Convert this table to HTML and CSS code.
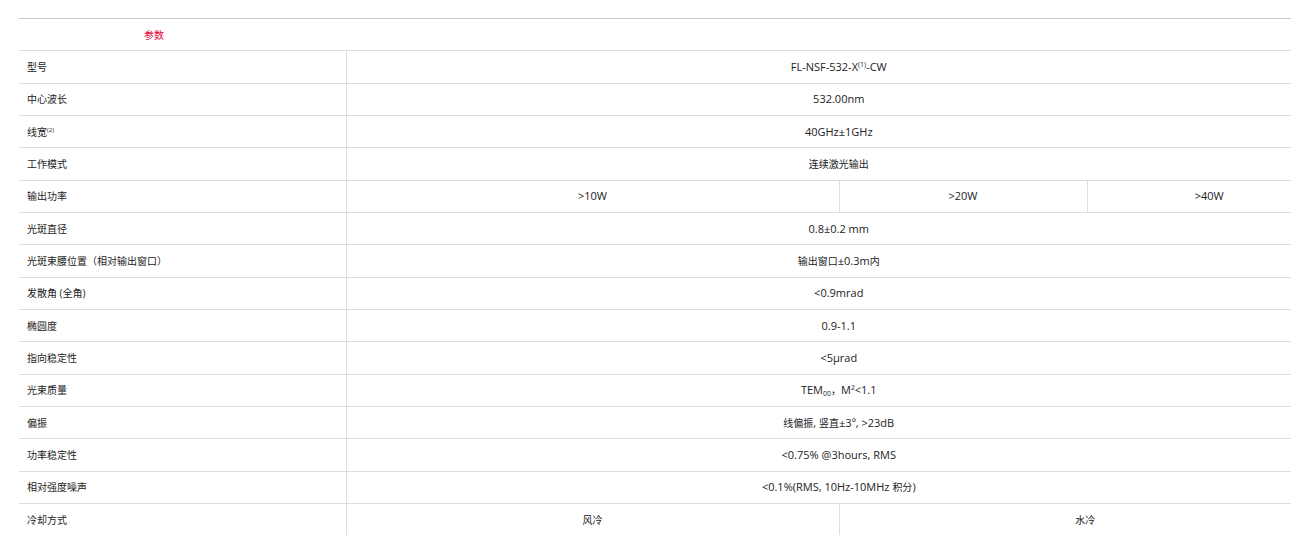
FILE: index.html
```html
<!DOCTYPE html>
<html lang="zh-CN">
<head>
<meta charset="utf-8">
<title>参数</title>
<link rel="stylesheet" href="styles.css">
</head>
<body>
<div class="wrap">
<table class="spec">
  <colgroup>
    <col class="c1"><col class="c2"><col class="c3"><col class="c4">
  </colgroup>
  <thead>
    <tr class="head"><th colspan="4"><span class="title">参数</span></th></tr>
  </thead>
  <tbody>
    <tr><td class="k">型号</td><td colspan="3">FL-NSF-532-X<sup>(1)</sup>-CW</td></tr>
    <tr><td class="k">中心波长</td><td colspan="3">532.00nm</td></tr>
    <tr><td class="k">线宽<sup>(2)</sup></td><td colspan="3">40GHz±1GHz</td></tr>
    <tr><td class="k">工作模式</td><td colspan="3"><span class="cn">连续激光输出</span></td></tr>
    <tr><td class="k">输出功率</td><td>&gt;10W</td><td>&gt;20W</td><td>&gt;40W</td></tr>
    <tr><td class="k">光斑直径</td><td colspan="3">0.8±0.2 mm</td></tr>
    <tr><td class="k">光斑束腰位置（相对输出窗口）</td><td colspan="3"><span class="cn">输出窗口</span>±0.3m<span class="cn">内</span></td></tr>
    <tr><td class="k">发散角 (全角)</td><td colspan="3">&lt;0.9mrad</td></tr>
    <tr><td class="k">椭圆度</td><td colspan="3">0.9-1.1</td></tr>
    <tr><td class="k">指向稳定性</td><td colspan="3">&lt;5μrad</td></tr>
    <tr><td class="k">光束质量</td><td colspan="3">TEM<sub>00</sub><span class="cn">，</span>M²&lt;1.1</td></tr>
    <tr><td class="k">偏振</td><td colspan="3"><span class="cn">线偏振</span>, <span class="cn">竖直</span>±3º, &gt;23dB</td></tr>
    <tr><td class="k">功率稳定性</td><td colspan="3">&lt;0.75% @3hours, RMS</td></tr>
    <tr><td class="k">相对强度噪声</td><td colspan="3">&lt;0.1%(RMS, 10Hz-10MHz <span class="cn">积分</span>)</td></tr>
    <tr><td class="k">冷却方式</td><td><span class="cn">风冷</span></td><td colspan="2"><span class="cn">水冷</span></td></tr>
  </tbody>
</table>
</div>
</body>
</html>
```
FILE: styles.css
```css
html, body {
  margin: 0;
  padding: 0;
  background: #fff;
  overflow: hidden;
}
body {
  font-family: "Open Sans", "Noto Sans CJK SC", sans-serif;
  font-size: 11px;
  color: #222;
}
.wrap {
  padding: 18px 0 0 19px;
  width: 1312px;
}
.spec {
  width: 1312px;
  table-layout: fixed;
  border-collapse: collapse;
  border-top: 1px solid #c8c8c8;
}
.c1 { width: 327px; }
.c2 { width: 493px; }
.c3 { width: 248px; }
.c4 { width: 244px; }
.spec tr { height: 32.33px; }
.spec th {
  text-align: left;
  font-weight: normal;
  font-size: 10px;
  padding: 0 0 0 125px;
  border-bottom: 1px solid #dedede;
}
.title { color: #e4003a; }
.spec td {
  padding: 0;
  text-align: center;
  border-bottom: 1px solid #dedede;
  border-left: 1px solid #dedede;
  line-height: 14px;
}
.spec td.k {
  text-align: left;
  padding-left: 8px;
  border-left: none;
  font-size: 10px;
}
.cn { font-size: 10px; }
sup, sub {
  font-size: 7px;
  line-height: 0;
}
.k sup { font-size: 6px; }
sup { vertical-align: 4px; }
sub { vertical-align: -2px; }
```
